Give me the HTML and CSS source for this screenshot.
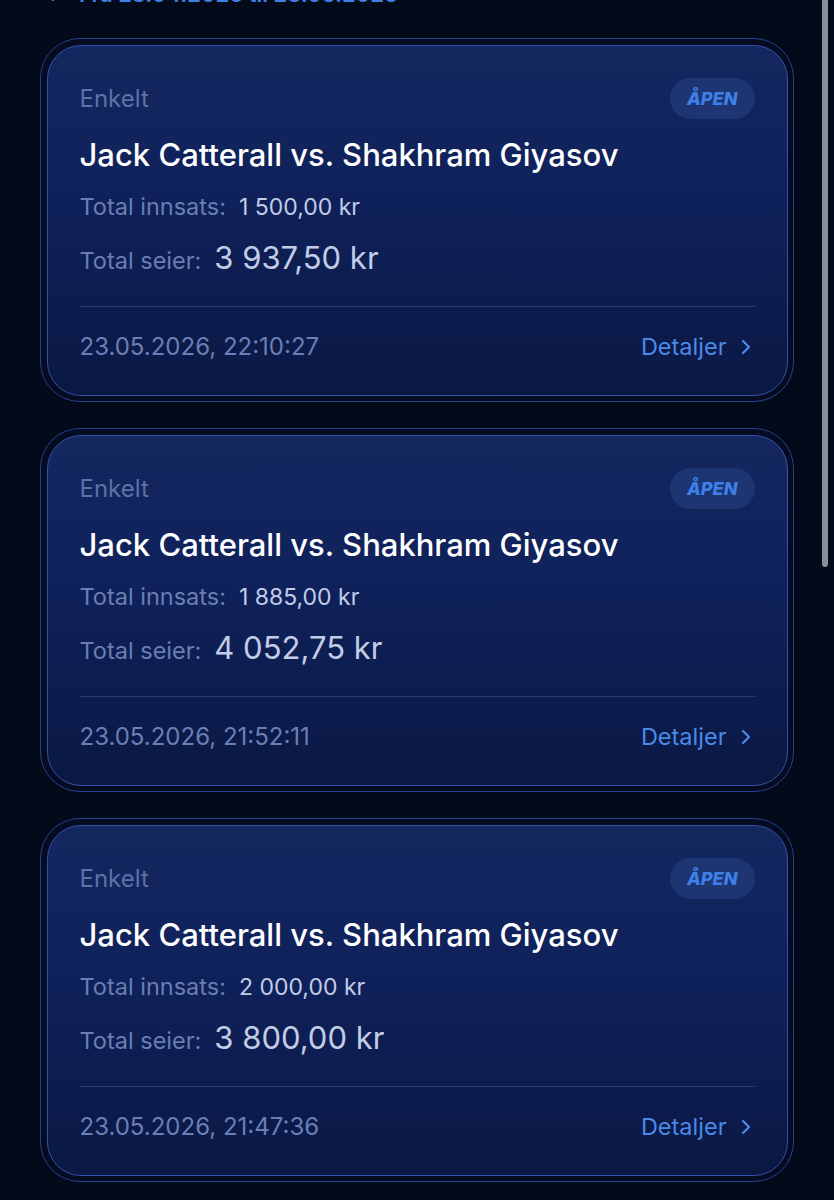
FILE: index.html
```html
<!DOCTYPE html>
<html lang="nb">
<head>
  <meta charset="UTF-8" />
  <meta name="viewport" content="width=device-width, initial-scale=1.0">
  <title>Mine spill</title>
  <link rel="stylesheet" href="styles.css">
</head>
<body>

  <!-- Datoområde (delvis skjult over toppen) -->
  <div class="rangeBar">
    <div class="rangeText">
      <svg class="rangeChevron" width="10" height="16" viewBox="0 0 10 16"><path d="M8 2 L2 8 L8 14" fill="none" stroke="currentColor" stroke-width="2.4" stroke-linecap="round" stroke-linejoin="round"/></svg>
      <span>Fra 23.04.2026 til 23.05.2026</span>
    </div>
  </div>

  <div class="betList">

    <div class="betRing">
      <div class="betCard">
        <div class="betTop">
          <span class="betType">Enkelt</span>
          <span class="statusPill">ÅPEN</span>
        </div>
        <div class="betTitle">Jack Catterall vs. Shakhram Giyasov</div>
        <div class="betRow"><span class="rowLabel">Total innsats:</span><span class="rowValue">1 500,00 kr</span></div>
        <div class="betRow big"><span class="rowLabel">Total seier:</span><span class="rowValue">3 937,50 kr</span></div>
        <div class="betFooter">
          <span class="betDate">23.05.2026, 22:10:27</span>
          <span class="detailsLink">Detaljer <svg width="12" height="18" viewBox="0 0 12 18"><path d="M3 3 L9 9 L3 15" fill="none" stroke="currentColor" stroke-width="2.2" stroke-linecap="round" stroke-linejoin="round"/></svg></span>
        </div>
      </div>
    </div>

    <div class="betRing">
      <div class="betCard">
        <div class="betTop">
          <span class="betType">Enkelt</span>
          <span class="statusPill">ÅPEN</span>
        </div>
        <div class="betTitle">Jack Catterall vs. Shakhram Giyasov</div>
        <div class="betRow"><span class="rowLabel">Total innsats:</span><span class="rowValue">1 885,00 kr</span></div>
        <div class="betRow big"><span class="rowLabel">Total seier:</span><span class="rowValue">4 052,75 kr</span></div>
        <div class="betFooter">
          <span class="betDate">23.05.2026, 21:52:11</span>
          <span class="detailsLink">Detaljer <svg width="12" height="18" viewBox="0 0 12 18"><path d="M3 3 L9 9 L3 15" fill="none" stroke="currentColor" stroke-width="2.2" stroke-linecap="round" stroke-linejoin="round"/></svg></span>
        </div>
      </div>
    </div>

    <div class="betRing">
      <div class="betCard">
        <div class="betTop">
          <span class="betType">Enkelt</span>
          <span class="statusPill">ÅPEN</span>
        </div>
        <div class="betTitle">Jack Catterall vs. Shakhram Giyasov</div>
        <div class="betRow"><span class="rowLabel">Total innsats:</span><span class="rowValue">2 000,00 kr</span></div>
        <div class="betRow big"><span class="rowLabel">Total seier:</span><span class="rowValue">3 800,00 kr</span></div>
        <div class="betFooter">
          <span class="betDate">23.05.2026, 21:47:36</span>
          <span class="detailsLink">Detaljer <svg width="12" height="18" viewBox="0 0 12 18"><path d="M3 3 L9 9 L3 15" fill="none" stroke="currentColor" stroke-width="2.2" stroke-linecap="round" stroke-linejoin="round"/></svg></span>
        </div>
      </div>
    </div>

  </div>

  <div class="scrollThumb"></div>

</body>
</html>
```

FILE: styles.css
```css
* { margin: 0; padding: 0; box-sizing: border-box; }
html, body {
  font-family: Inter, "Noto Sans", sans-serif;
  background: #030a1a;
  height: 100vh;
  overflow: hidden;
  color: #fff;
}

.rangeBar {
  display: flex;
  align-items: flex-start;
  height: 38px;
  padding-left: 45px;
}
.rangeText {
  display: flex;
  align-items: center;
  gap: 24px;
  margin-top: -20px;
  height: 28px;
  color: #3f80e4;
  font-size: 22px;
  font-weight: 600;
}

.betList {
  display: flex;
  flex-direction: column;
  gap: 26px;
  padding: 0 40px;
}

.betRing {
  border: 1.5px solid #27408e;
  border-radius: 40px;
  padding: 5.5px;
  background: #050c22;
}

.betCard {
  border: 1px solid #3550a8;
  border-radius: 34px;
  background: linear-gradient(180deg, #14275f 0%, #0f215a 45%, #0a1843 100%);
  padding: 32px 32px 34px 32px;
}

.betTop {
  display: flex;
  justify-content: space-between;
  align-items: center;
  height: 41px;
}
.betType {
  font-size: 24px;
  color: #5d72a8;
}
.statusPill {
  height: 41px;
  padding: 0 17px;
  border-radius: 21px;
  background: #1d3572;
  color: #3e80e8;
  font-size: 18px;
  font-weight: 800;
  font-style: italic;
  display: flex;
  align-items: center;
}

.betTitle {
  margin-top: 18px;
  font-size: 31px;
  line-height: 36px;
  font-weight: 500;
  color: #fff;
}

.betRow {
  display: flex;
  align-items: baseline;
  gap: 13px;
  margin-top: 20px;
  line-height: 28px;
}
.rowLabel {
  font-size: 23.5px;
  color: #6a7eb2;
}
.rowValue {
  font-size: 23px;
  color: #c3cce6;
}
.betRow.big {
  margin-top: 19px;
  line-height: 36px;
}
.betRow.big .rowValue {
  font-size: 31px;
}

.betFooter {
  margin-top: 27px;
  border-top: 1px solid #2b3b6c;
  padding-top: 26px;
  display: flex;
  justify-content: space-between;
  align-items: center;
  line-height: 28px;
}
.betDate {
  font-size: 24px;
  color: #6b7fb4;
}
.detailsLink {
  display: flex;
  align-items: center;
  gap: 13px;
  margin-right: 3px;
  font-size: 23.5px;
  color: #4a8ae8;
}

.scrollThumb {
  position: fixed;
  top: -10px;
  right: 6px;
  width: 6px;
  height: 577px;
  border-radius: 3px;
  background: #8a8e9b;
}
```
